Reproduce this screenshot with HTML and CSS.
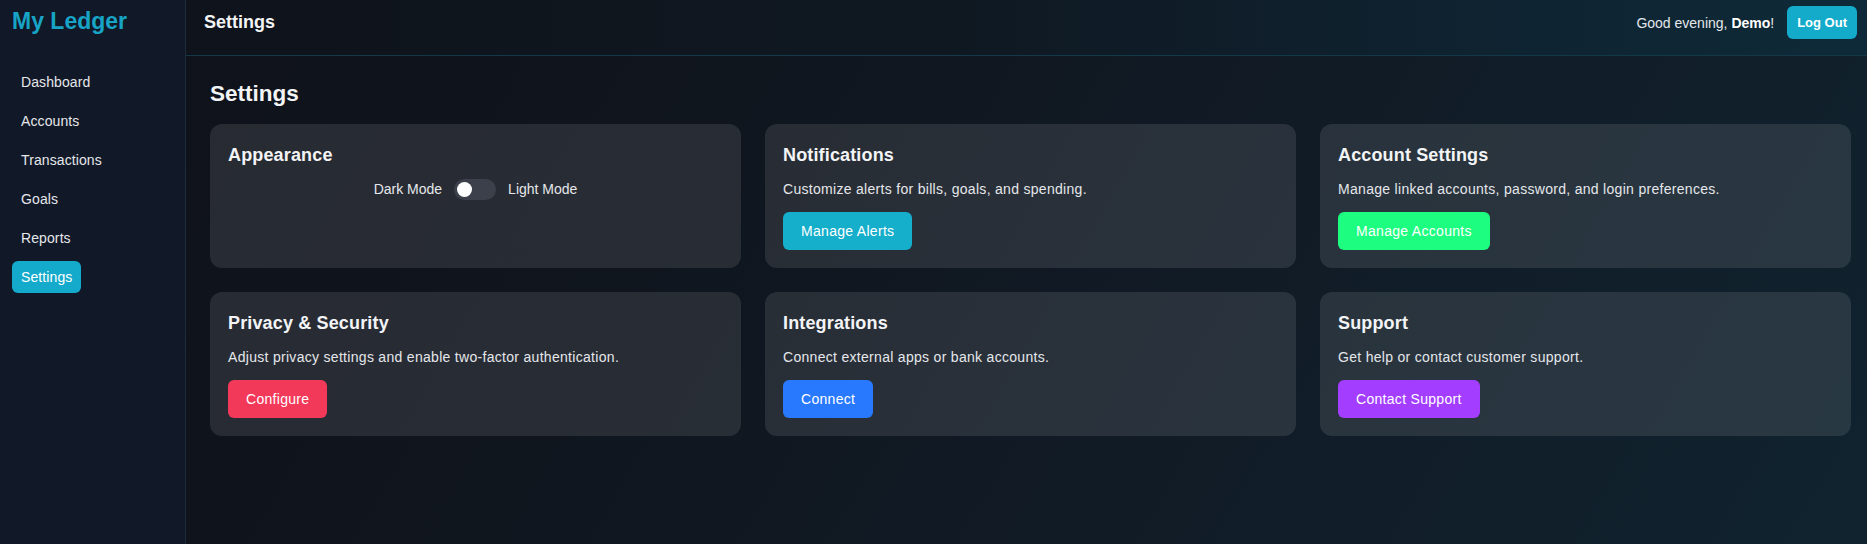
FILE: index.html
```html
<!DOCTYPE html>
<html lang="en">
<head>
<meta charset="utf-8">
<title>My Ledger - Settings</title>
<link rel="stylesheet" href="styles.css">
</head>
<body>
<div class="app">
  <aside class="sidebar">
    <div class="logo">My Ledger</div>
    <nav class="nav">
      <a class="nav-item">Dashboard</a>
      <a class="nav-item">Accounts</a>
      <a class="nav-item">Transactions</a>
      <a class="nav-item">Goals</a>
      <a class="nav-item">Reports</a>
      <a class="nav-item active">Settings</a>
    </nav>
  </aside>
  <div class="main-wrap">
    <header class="topbar">
      <div class="topbar-title">Settings</div>
      <div class="topbar-right">
        <span class="greeting">Good evening, <b>Demo</b>!</span>
        <button class="logout">Log Out</button>
      </div>
    </header>
    <main class="content">
      <h1 class="page-title">Settings</h1>
      <div class="grid">
        <section class="card">
          <h3 class="card-title">Appearance</h3>
          <div class="toggle-row">
            <span>Dark Mode</span>
            <span class="toggle"><span class="knob"></span></span>
            <span>Light Mode</span>
          </div>
        </section>
        <section class="card">
          <h3 class="card-title">Notifications</h3>
          <p class="card-desc">Customize alerts for bills, goals, and spending.</p>
          <button class="btn btn-cyan">Manage Alerts</button>
        </section>
        <section class="card">
          <h3 class="card-title">Account Settings</h3>
          <p class="card-desc">Manage linked accounts, password, and login preferences.</p>
          <button class="btn btn-green">Manage Accounts</button>
        </section>
        <section class="card">
          <h3 class="card-title">Privacy &amp; Security</h3>
          <p class="card-desc">Adjust privacy settings and enable two-factor authentication.</p>
          <button class="btn btn-red">Configure</button>
        </section>
        <section class="card">
          <h3 class="card-title">Integrations</h3>
          <p class="card-desc">Connect external apps or bank accounts.</p>
          <button class="btn btn-blue">Connect</button>
        </section>
        <section class="card">
          <h3 class="card-title">Support</h3>
          <p class="card-desc">Get help or contact customer support.</p>
          <button class="btn btn-purple">Contact Support</button>
        </section>
      </div>
    </main>
  </div>
</div>
</body>
</html>
```

FILE: styles.css
```css
* { box-sizing: border-box; }

html, body {
  margin: 0;
  padding: 0;
  height: 544px;
  overflow: hidden;
}

body {
  font-family: "Liberation Sans", Arial, sans-serif;
  color: #e5e7eb;
  background: #0f131c;
}

.app {
  display: flex;
  height: 544px;
}

.sidebar {
  width: 186px;
  flex: 0 0 186px;
  background: #111827;
  border-right: 1px solid #1c2b3a;
  padding: 8px 12px;
  display: flex;
  flex-direction: column;
}

.logo {
  font-size: 23px;
  line-height: 27px;
  font-weight: 700;
  color: #17a4c6;
}

.nav {
  margin-top: 31px;
  display: flex;
  flex-direction: column;
  align-items: flex-start;
  gap: 7px;
}

.nav-item {
  font-size: 14px;
  line-height: 20px;
  padding: 6px 9px;
  border-radius: 6px;
  color: #e5e7eb;
  letter-spacing: 0.1px;
}

.nav-item.active {
  background: #14aacb;
  color: #ffffff;
}

.main-wrap {
  flex: 1;
  display: flex;
  flex-direction: column;
  background: linear-gradient(120deg, #0f121a 0%, #10161f 35%, #111c27 65%, #10232f 100%);
}

.topbar {
  display: flex;
  justify-content: space-between;
  align-items: center;
  padding: 6px 10px 16px 18px;
  border-bottom: 1px solid #133847;
  background: linear-gradient(90deg, #0f131b 0%, #0f1821 45%, #0f2230 75%, #0e2a38 100%);
}

.topbar-title {
  font-size: 18px;
  font-weight: 700;
  color: #f3f4f6;
}

.topbar-right {
  display: flex;
  align-items: center;
  gap: 13px;
}

.greeting {
  font-size: 14px;
  color: #e5e7eb;
}

.greeting b {
  color: #ffffff;
}

.logout {
  font-family: inherit;
  font-size: 13px;
  font-weight: 700;
  line-height: 19px;
  padding: 7px 10px;
  border: none;
  border-radius: 6px;
  background: #14abcb;
  color: #ffffff;
}

.content {
  flex: 1;
  padding: 25px 16px 24px 24px;
}

.page-title {
  margin: 0 0 17px;
  font-size: 22.5px;
  line-height: 26px;
  font-weight: 700;
  color: #f3f4f6;
}

.grid {
  display: grid;
  grid-template-columns: repeat(3, 1fr);
  gap: 24px;
}

.card {
  background: rgba(255, 255, 255, 0.1);
  border-radius: 12px;
  padding: 18px;
  height: 144px;
}

.card-title {
  margin: 0;
  font-size: 18px;
  line-height: 27px;
  font-weight: 700;
  color: #f3f4f6;
  letter-spacing: 0.15px;
}

.card-desc {
  margin: 10px 0 12px;
  font-size: 14px;
  line-height: 21px;
  color: #e5e7eb;
  letter-spacing: 0.3px;
}

.toggle-row {
  margin-top: 10px;
  display: flex;
  justify-content: center;
  align-items: center;
  gap: 12px;
  font-size: 14px;
  line-height: 21px;
  color: #e5e7eb;
}

.toggle {
  display: flex;
  align-items: center;
  width: 42px;
  height: 21px;
  padding: 3px;
  border-radius: 11px;
  background: #3b404b;
}

.knob {
  width: 15px;
  height: 15px;
  border-radius: 50%;
  background: #ffffff;
}

.btn {
  font-family: inherit;
  font-size: 14px;
  line-height: 18px;
  padding: 10px 18px;
  border: none;
  border-radius: 6px;
  color: #ffffff;
  letter-spacing: 0.3px;
}

.btn-cyan { background: #15aecb; }
.btn-green { background: #1dfd80; }
.btn-red { background: #f2395a; }
.btn-blue { background: #2979ff; }
.btn-purple { background: #a33dff; }
```
